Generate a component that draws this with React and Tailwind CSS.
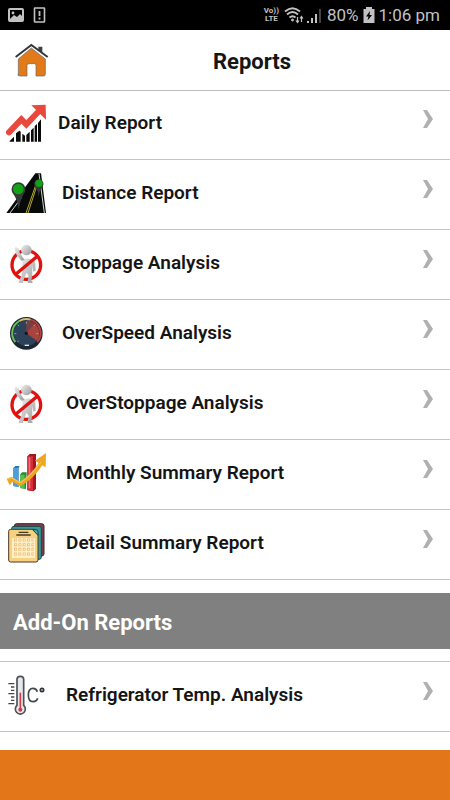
const HomeIcon = () => (
    <svg className="w-9 h-9" viewBox="45 125 108 108" fill="none">
        <path d="M118 139h12v19l-12-10z" fill="#3b3f45" />
        <path d="M58 226V176L97 143l42 33v46q0 5-5 5h-23v-32q0-5-5-5H90q-6 0-6 5v32H63q-5 0-5-5z" fill="#e27a1a" stroke="#5f6668" strokeWidth="2" />
        <path d="M50 170L97 134l49 36" stroke="#33373c" strokeWidth="6" />
    </svg>
);

const DailyIcon = () => (
    <svg className="w-10 h-10 shrink-0" viewBox="18 21 120 120" fill="none">
        <path d="M29 137v-2l13-13v15zM48 137v-25l10-8 4 3v30zM67 137v-24l8 6v18zM79 137v-20l10-10v30zM93 137v-34l8-8v42zM104 137V91l7-7v53zM114 137V81l9-11v67z" fill="#0a0a0a" />
        <path d="M27 109l37-39 15 15 41-43" stroke="#e8493c" strokeWidth="18" strokeLinecap="round" />
        <path d="M94 28l43-2 1 45z" fill="#e8493c" />
    </svg>
);

const DistanceIcon = () => (
    <svg className="w-10 h-10 shrink-0" viewBox="18 21 120 120" fill="none">
        <path d="M19 141L106 22h17l15 119z" fill="#070a07" />
        <path d="M30 141l35-47M117 23l16 118" stroke="#cfd2cf" strokeWidth="3" />
        <path d="M78 141l30-86M84 141l28-86" stroke="#b5aa32" strokeWidth="3" />
        <path d="M56 132Q54 103 40 84A21 21 0 1 1 71 84Q60 103 56 132z" fill="#35393a" />
        <circle cx="55" cy="69" r="16" fill="#10a414" />
        <path d="M116 92q-1-16-8-27a14 14 0 1 1 17 0q-8 11-9 27z" fill="#35393a" />
        <circle cx="117" cy="52" r="11" fill="#10a414" />
    </svg>
);

const StoppageIcon = () => (
    <svg className="w-10 h-10 shrink-0" viewBox="18 21 120 120" fill="none">
        <defs>
            <linearGradient id="body" x1="0" y1="0" x2="1" y2="1">
                <stop stopColor="#f0f0f0" />
                <stop offset="1" stopColor="#999999" />
            </linearGradient>
        </defs>
        <circle cx="79" cy="87" r="43" stroke="#e0120f" strokeWidth="10" />
        <g fill="url(#body)">
            <path d="M67 72q12-8 31-2 7 3 8 13l1 21-7 3-4-18 1 26-3 20 4 2-1 5H84l-1-4 3-18-6-10-6 13-4 12-1 8H57l-1-5 8-18 4-19z" />
            <path d="M64 74l-14-17-7-17q-1-5 3-3l-1-4q2-4 5 1l3 4 3-2 2 9 1 5 15 22z" />
            <ellipse cx="79" cy="42" rx="16" ry="16" />
        </g>
        <path d="M47 115l66-55" stroke="#e0120f" strokeWidth="10" />
    </svg>
);

const SpeedIcon = () => (
    <svg className="w-10 h-10 shrink-0" viewBox="18 21 120 120" fill="none">
        <circle cx="83" cy="87" r="48" stroke="#dedede" strokeDasharray="3 3" />
        <circle cx="79" cy="82" r="49" fill="#1c2631" />
        <circle cx="79" cy="82" r="38" fill="#2b4259" />
        <path d="M79 82V43a39 39 0 0 1 32 61z" fill="#783f43" />
        <path d="M79 82l25-29a38 38 0 0 1 7 51z" fill="#a94340" />
        <path d="M46 108A42 42 0 0 1 58 45" stroke="#69bf59" strokeWidth="6" />
        <path d="M58 45a42 42 0 0 1 34-4" stroke="#d7bd72" strokeWidth="6" />
        <path d="M92 41a42 42 0 0 1 20 67" stroke="#b9433a" strokeWidth="6" />
        <path d="M79 47v6M53 56l4 4M43 83h6M105 56l-4 4M115 83h-6M52 108l4-4" stroke="#c0cbd0" strokeWidth="2" />
        <circle cx="79" cy="82" r="5" fill="#10161e" />
        <path d="M74 118h13" stroke="#e5e8ea" strokeWidth="4" />
    </svg>
);

const MonthlyIcon = () => (
    <svg className="w-10 h-10 shrink-0" viewBox="18 21 120 120" fill="none">
        <path d="M40 66l6-6h13l-3 6v57l-16-3z" fill="#2877bb" />
        <path d="M40 66h14v57l-14-3z" fill="#4b9fdb" />
        <path d="M60 86l6-7h14l-2 50-18-3z" fill="#268d34" />
        <path d="M60 86h14v42l-14-2z" fill="#59bd54" />
        <path d="M82 31l7-7h19v105l-8 7-18-3z" fill="#a51624" />
        <path d="M82 31h17v104l-17-3z" fill="#d52e39" />
        <path d="M86 34h5v93h-5z" fill="#e9737b" />
        <path d="M20 98l14-6 26 15q30-19 56-56l-11-7 33-23-1 43-10-6q-28 43-67 63L38 107l-9 11z" fill="#efa722" />
        <path d="M23 99l11-4 26 15q32-18 62-61" stroke="#f9cd60" strokeWidth="3" />
    </svg>
);

const DetailIcon = () => (
    <svg className="w-10 h-10 shrink-0" viewBox="18 21 120 120" fill="none" strokeWidth="3">
        <rect x="43" y="23" width="89" height="97" rx="7" fill="#7c3f49" stroke="#38282e" />
        <rect x="35" y="31" width="89" height="99" rx="7" fill="#36989a" stroke="#1e4346" />
        <path d="M32 40h70l12 16v76q0 6-6 6H32q-6 0-6-6V46q0-6 6-6z" fill="#f7d17f" stroke="#493820" />
        <path d="M98 41l16 17v-12q0-5-6-5z" fill="#45adb2" stroke="#1e4346" />
        <path d="M56 49h29M49 57h43" stroke="#453923" strokeWidth="4" />
        <rect x="36" y="66" width="69" height="60" fill="#fff0c6" />
        <path d="M42 72h60M42 86h60M42 100h60M42 114h60" stroke="#f0bf7f" strokeWidth="9" strokeDasharray="9 4" />
        <path d="M45 72h60M45 86h60M45 100h60M45 114h60" stroke="#fff0c6" strokeWidth="4" strokeDasharray="4 9" />
    </svg>
);

const TempIcon = () => (
    <svg className="w-10 h-10 shrink-0" viewBox="18 27 120 120" fill="none">
        <path d="M51 118V40q0-9 10-9t10 9v78a15 15 0 1 1-20 0z" fill="#e5e9eb" stroke="#4b5156" strokeWidth="5" />
        <path d="M61 80v50" stroke="#d63946" strokeWidth="5" />
        <circle cx="61" cy="131" r="6" fill="#d63946" />
        <path d="M25 53h18M33 63h10M33 73h10M25 83h18M33 93h10M33 103h10M25 113h18" stroke="#42484c" strokeWidth="4" />
        <path d="M112 77q-3-10-13-10-14 0-14 20t14 20q11 0 14-10" stroke="#42484c" strokeWidth="5" />
        <circle cx="126" cy="72" r="5" stroke="#303539" strokeWidth="5" />
    </svg>
);

const reports = [
    { name: "Daily Report", Icon: DailyIcon, space: "ml-3" },
    { name: "Distance Report", Icon: DistanceIcon, space: "ml-4" },
    { name: "Stoppage Analysis", Icon: StoppageIcon, space: "ml-4" },
    { name: "OverSpeed Analysis", Icon: SpeedIcon, space: "ml-4" },
    { name: "OverStoppage Analysis", Icon: StoppageIcon, space: "ml-5" },
    { name: "Monthly Summary Report", Icon: MonthlyIcon, space: "ml-5" },
    { name: "Detail Summary Report", Icon: DetailIcon, space: "ml-5" },
];

const addOns = [
    { name: "Refrigerator Temp. Analysis", Icon: TempIcon, space: "ml-5" },
];

const ReportRow = ({ name, Icon, space }) => (
    <li>
        <a href="#" className="flex items-center h-[70px] pl-[6px] pr-4 pb-1 border-b border-[#c4c4c4]">
            <Icon />
            <span className={`${space} grow text-[19px] leading-6 font-semibold text-[#151515]`}>{name}</span>
            <svg className="w-3 h-5 mb-2" viewBox="0 0 12 20" fill="#b0b0b0">
                <path d="M1 1h4l6 9-6 9H1l5-9z" />
            </svg>
        </a>
    </li>
);

const StatusBar = () => (
    <div className="flex items-center justify-between h-[30px] pl-2 pr-[10px] bg-black text-[#c2c2c2]">
        <div className="flex items-center gap-2">
            <svg className="w-4 h-4" viewBox="0 0 16 16" fill="none">
                <rect x="1" y="2" width="14" height="12" rx="1" stroke="currentColor" strokeWidth="2" />
                <path d="M2 12l4-4 3 2 3-3 2 2v4H2z" fill="currentColor" />
                <circle cx="5" cy="6" r="1.4" fill="currentColor" />
            </svg>
            <svg className="w-4 h-4" viewBox="0 0 16 16" fill="none" stroke="currentColor">
                <rect x="2.5" y="1" width="10" height="14" rx="0.5" strokeWidth="1.6" />
                <path d="M7.5 4v5M7.5 10.5v2" strokeWidth="1.8" />
            </svg>
        </div>
        <div className="flex items-center">
            <div className="flex flex-col items-center text-[8px] leading-[8px] font-bold">
                <span>Vo))</span>
                <span>LTE</span>
            </div>
            {/* Wifi and signal */}
            <svg className="w-5 h-5 ml-[5px]" viewBox="0 0 20 20" fill="none" stroke="currentColor">
                <path d="M1 6.5Q8.500 0 16 6.500M3 9.500Q8.500 4.500 14 9.500M5.500 12.500Q8.500 10 11.500 12.500" strokeWidth="1.9" />
                <circle cx="8.500" cy="15" r="1" fill="currentColor" />
                <path d="M13.500 12v5M12 15.500l1.500 2 1.500-2M17.500 17v-5M16 13.500l1.500-2 1.500 2" strokeWidth="1.2" />
            </svg>
            <svg className="w-4 h-5 ml-[3px]" viewBox="0 0 16 20" fill="currentColor">
                <path d="M0 16h2v2H0zM4 13h2v5H4zM8 9h2v9H8z" />
                <path d="M12 4h2v14h-2z" opacity="0.35" />
            </svg>
            <span className="ml-1 text-[17px] leading-6">80%</span>
            <svg className="w-3 h-4 ml-1" viewBox="0 0 12 16">
                <path d="M3 0h6v2h2.500v14H.5V2H3z" fill="currentColor" />
                <path d="M7 4L3 9.500h2.500L4.500 13.500 9 8H6.500z" fill="#000" />
            </svg>
            <span className="ml-1 text-[17px] leading-6">1:06 pm</span>
        </div>
    </div>
);

export default function App() {
    return (
        <div className="flex flex-col min-h-screen bg-white font-['Roboto',sans-serif]">
            <StatusBar />

            {/* Header */}
            <header className="grid grid-cols-[1fr_auto_1fr] items-center h-[61px] px-[14px] border-b border-[#bdbdbd]">
                <button type="button" aria-label="Home" className="w-9 h-9">
                    <HomeIcon />
                </button>
                <h1 className="ml-[54px] pt-[3px] text-[22px] leading-7 font-bold text-[#151515]">Reports</h1>
            </header>

            <main className="grow">
                <ul className="-mt-px">
                    {reports.map((report) => (
                        <ReportRow key={report.name} {...report} />
                    ))}
                </ul>

                {/* Add-on section */}
                <h2 className="mt-[13px] h-14 pl-[13px] pt-[3px] flex items-center bg-[#808080] text-white text-[22px] leading-7 font-bold">Add-On Reports</h2>
                <ul className="mt-3 border-t border-[#c4c4c4]">
                    {addOns.map((report) => (
                        <ReportRow key={report.name} {...report} />
                    ))}
                </ul>
            </main>

            <footer className="h-[50px] bg-[#e27618]" />
        </div>
    );
}
